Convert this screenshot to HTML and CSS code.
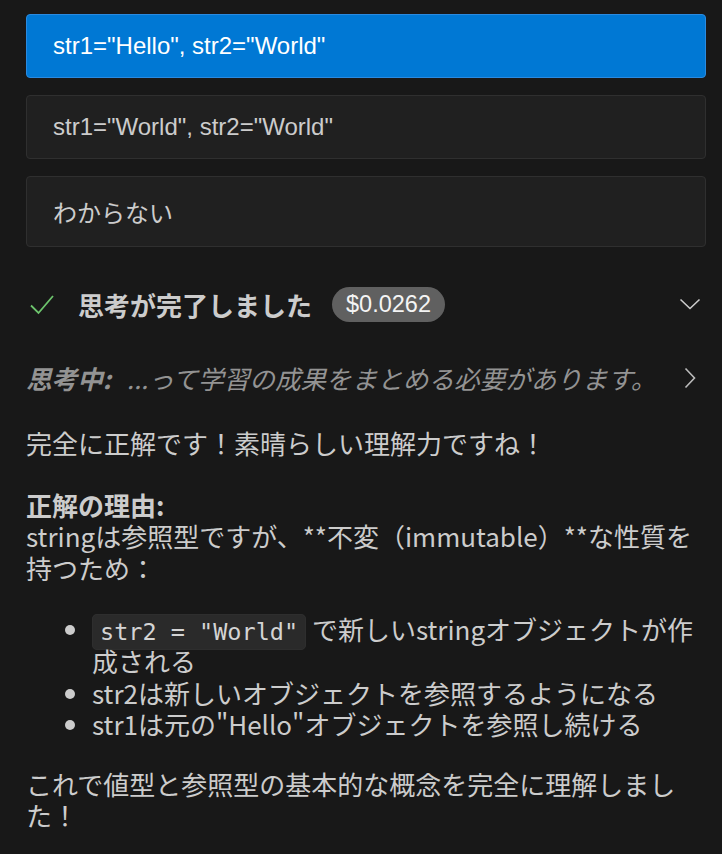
FILE: index.html
```html
<!DOCTYPE html>
<html lang="ja">
  <head>
    <meta charset="UTF-8" />
    <meta name="viewport" content="width=device-width, initial-scale=1.0" />
    <title>Chat</title>
    <link rel="stylesheet" href="styles.css">
  </head>
  <body>
    <div class="chat">
      <div class="options">
        <div class="option selected">str1="Hello", str2="World"</div>
        <div class="option">str1="World", str2="World"</div>
        <div class="option">わからない</div>
      </div>

      <!-- thinking summary -->
      <div class="thinking-head">
        <svg class="check" width="28" height="28" viewBox="0 0 28 28">
          <path d="M3 15.5 L10.5 23 L25 6" fill="none" stroke="#6dc46d" stroke-width="1.8" />
        </svg>
        <span class="thinking-title">思考が完了しました</span>
        <span class="cost">$0.0262</span>
        <svg class="chevron-down" width="22" height="14" viewBox="0 0 22 14">
          <path d="M1.5 2.5 L11 11.5 L20.5 2.5" fill="none" stroke="#cccccc" stroke-width="1.6" />
        </svg>
      </div>

      <div class="thinking-line">
        <span class="thinking-text"><b>思考中:</b> ...って学習の成果をまとめる必要があります。</span>
        <svg class="chevron-right" width="14" height="22" viewBox="0 0 14 22">
          <path d="M2.5 1.5 L11.5 11 L2.5 20.5" fill="none" stroke="#bbbbbb" stroke-width="1.6" />
        </svg>
      </div>

      <div class="answer">
        <p>完全に正解です！素晴らしい理解力ですね！</p>
        <p><strong>正解の理由:</strong><br>stringは参照型ですが、**不変（immutable）**な性質を持つため：</p>
        <ul>
          <li><code>str2 = "World"</code> で新しいstringオブジェクトが作成される</li>
          <li>str2は新しいオブジェクトを参照するようになる</li>
          <li>str1は元の"Hello"オブジェクトを参照し続ける</li>
        </ul>
        <p>これで値型と参照型の基本的な概念を完全に理解しました！</p>
      </div>
    </div>
  </body>
</html>
```

FILE: styles.css
```css
html,
body {
  margin: 0;
  background-color: #181818;
  color: #cccccc;
  font-family: "Noto Sans CJK JP", "Noto Sans", sans-serif;
}

.chat {
  padding: 14px 16px 0 26px;
}

.options {
  display: flex;
  flex-direction: column;
  gap: 17px;
}

.option {
  padding: 17px 26px;
  border: 1px solid #2f2f2f;
  border-radius: 4px;
  background-color: #202020;
  color: #cccccc;
  font-family: "Liberation Sans", "Noto Sans CJK JP", sans-serif;
  font-size: 24px;
}

.option.selected {
  background-color: #0078d4;
  border-color: #2a8ae0;
  color: #ffffff;
}

.thinking-head {
  display: flex;
  align-items: center;
  height: 36px;
  margin-top: 39px;
}

.check {
  margin-left: 2px;
  margin-right: 22px;
}

.thinking-title {
  font-size: 26px;
  font-weight: bold;
  color: #cccccc;
}

.cost {
  margin-left: 20px;
  padding: 0 14px;
  height: 35px;
  line-height: 35px;
  border-radius: 18px;
  background-color: #606060;
  color: #f4f4f4;
  font-family: "Liberation Sans", sans-serif;
  font-size: 23.5px;
}

.chevron-down {
  margin-left: auto;
  margin-right: 5px;
}

.thinking-line {
  display: flex;
  align-items: center;
  margin-top: 40px;
  line-height: 32px;
}

.thinking-text {
  font-size: 25.6px;
  font-style: italic;
  color: #939393;
}

.thinking-text b {
  font-weight: bold;
  margin-right: 10px;
}

.chevron-right {
  margin-left: auto;
  margin-right: 9px;
}

.answer {
  margin-top: 33px;
  font-size: 26px;
  line-height: 31.6px;
}

.answer p {
  margin: 0 0 30px;
}

.answer ul {
  margin: 0 0 28px;
  padding-left: 66px;
}

.answer code {
  font-family: "DejaVu Sans Mono", monospace;
  font-size: 23.5px;
  line-height: 1;
  padding: 3px 7px;
  border: 1px solid #2e2e2e;
  border-radius: 5px;
  background-color: #2a2a2a;
  color: #d4d4d4;
}
```
